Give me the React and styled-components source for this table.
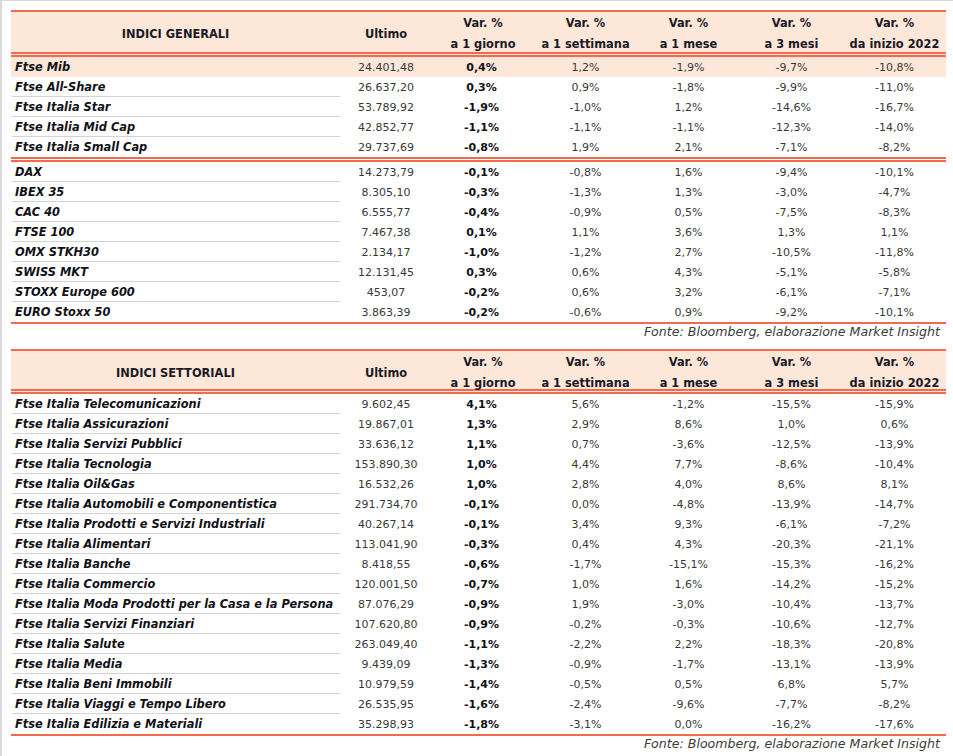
import React from "react";
import styled, { createGlobalStyle } from "styled-components";

const ORANGE = "#f26a50";
const PEACH = "#fde7d9";
const COLS = "329px 92px 102px 103px 103px 103px 103px";

const GlobalStyle = createGlobalStyle`
  html, body {
    margin: 0;
    padding: 0;
    background: #ffffff;
  }
  body {
    font-family: "DejaVu Sans", "Liberation Sans", sans-serif;
    color: #141420;
  }
`;

const generali = [
  [
    ["Ftse Mib", "24.401,48", "0,4%", "1,2%", "-1,9%", "-9,7%", "-10,8%", true],
    ["Ftse All-Share", "26.637,20", "0,3%", "0,9%", "-1,8%", "-9,9%", "-11,0%"],
    ["Ftse Italia Star", "53.789,92", "-1,9%", "-1,0%", "1,2%", "-14,6%", "-16,7%"],
    ["Ftse Italia Mid Cap", "42.852,77", "-1,1%", "-1,1%", "-1,1%", "-12,3%", "-14,0%"],
    ["Ftse Italia Small Cap", "29.737,69", "-0,8%", "1,9%", "2,1%", "-7,1%", "-8,2%"],
  ],
  [
    ["DAX", "14.273,79", "-0,1%", "-0,8%", "1,6%", "-9,4%", "-10,1%"],
    ["IBEX 35", "8.305,10", "-0,3%", "-1,3%", "1,3%", "-3,0%", "-4,7%"],
    ["CAC 40", "6.555,77", "-0,4%", "-0,9%", "0,5%", "-7,5%", "-8,3%"],
    ["FTSE 100", "7.467,38", "0,1%", "1,1%", "3,6%", "1,3%", "1,1%"],
    ["OMX STKH30", "2.134,17", "-1,0%", "-1,2%", "2,7%", "-10,5%", "-11,8%"],
    ["SWISS MKT", "12.131,45", "0,3%", "0,6%", "4,3%", "-5,1%", "-5,8%"],
    ["STOXX Europe 600", "453,07", "-0,2%", "0,6%", "3,2%", "-6,1%", "-7,1%"],
    ["EURO Stoxx 50", "3.863,39", "-0,2%", "-0,6%", "0,9%", "-9,2%", "-10,1%"],
  ],
];

const settoriali = [
  [
    ["Ftse Italia Telecomunicazioni", "9.602,45", "4,1%", "5,6%", "-1,2%", "-15,5%", "-15,9%"],
    ["Ftse Italia Assicurazioni", "19.867,01", "1,3%", "2,9%", "8,6%", "1,0%", "0,6%"],
    ["Ftse Italia Servizi Pubblici", "33.636,12", "1,1%", "0,7%", "-3,6%", "-12,5%", "-13,9%"],
    ["Ftse Italia Tecnologia", "153.890,30", "1,0%", "4,4%", "7,7%", "-8,6%", "-10,4%"],
    ["Ftse Italia Oil&Gas", "16.532,26", "1,0%", "2,8%", "4,0%", "8,6%", "8,1%"],
    ["Ftse Italia Automobili e Componentistica", "291.734,70", "-0,1%", "0,0%", "-4,8%", "-13,9%", "-14,7%"],
    ["Ftse Italia Prodotti e Servizi Industriali", "40.267,14", "-0,1%", "3,4%", "9,3%", "-6,1%", "-7,2%"],
    ["Ftse Italia Alimentari", "113.041,90", "-0,3%", "0,4%", "4,3%", "-20,3%", "-21,1%"],
    ["Ftse Italia Banche", "8.418,55", "-0,6%", "-1,7%", "-15,1%", "-15,3%", "-16,2%"],
    ["Ftse Italia Commercio", "120.001,50", "-0,7%", "1,0%", "1,6%", "-14,2%", "-15,2%"],
    ["Ftse Italia Moda Prodotti per la Casa e la Persona", "87.076,29", "-0,9%", "1,9%", "-3,0%", "-10,4%", "-13,7%"],
    ["Ftse Italia Servizi Finanziari", "107.620,80", "-0,9%", "-0,2%", "-0,3%", "-10,6%", "-12,7%"],
    ["Ftse Italia Salute", "263.049,40", "-1,1%", "-2,2%", "2,2%", "-18,3%", "-20,8%"],
    ["Ftse Italia Media", "9.439,09", "-1,3%", "-0,9%", "-1,7%", "-13,1%", "-13,9%"],
    ["Ftse Italia Beni Immobili", "10.979,59", "-1,4%", "-0,5%", "0,5%", "6,8%", "5,7%"],
    ["Ftse Italia Viaggi e Tempo Libero", "26.535,95", "-1,6%", "-2,4%", "-9,6%", "-7,7%", "-8,2%"],
    ["Ftse Italia Edilizia e Materiali", "35.298,93", "-1,8%", "-3,1%", "0,0%", "-16,2%", "-17,6%"],
  ],
];

const periods = ["a 1 giorno", "a 1 settimana", "a 1 mese", "a 3 mesi", "da inizio 2022"];

const Page = styled.div`
  min-height: 755px;
  box-sizing: border-box;
  border-top: 1px solid #d9d9d9;
  border-left: 2px solid #dadada;
  padding: 9px 0 0 9px;
`;

const Table = styled.section`
  width: 935px;
  border-top: 2px solid ${ORANGE};
  border-bottom: 2px solid ${ORANGE};
`;

const HeadRow = styled.div`
  display: grid;
  grid-template-columns: ${COLS};
  height: ${(p) => p.$height - 1}px;
  padding-top: 1px;
  background: ${PEACH};
  border-bottom: 5px double ${ORANGE};
  font-size: 11.4px;
  font-weight: bold;
  color: #1a1a26;
`;

const HeadCell = styled.div`
  display: flex;
  flex-direction: column;
  align-items: center;
  justify-content: center;
  line-height: 21px;
  white-space: nowrap;
`;

const Group = styled.div`
  & + & {
    border-top: 5px double ${ORANGE};
  }
`;

const Row = styled.div`
  display: grid;
  grid-template-columns: ${COLS};
  height: 20px;
  background: ${(p) => (p.$highlight ? PEACH : "transparent")};
`;

const Label = styled.div`
  display: flex;
  align-items: center;
  box-sizing: border-box;
  padding-left: 3px;
  margin-left: 1px;
  font-size: 11.4px;
  font-weight: bold;
  font-style: italic;
  color: #111118;
  white-space: nowrap;
  border-bottom: 1px solid ${(p) => (p.$line ? "#d4d4d4" : "transparent")};
`;

const Value = styled.div`
  display: flex;
  align-items: center;
  justify-content: center;
  padding-right: ${(p) => (p.$bold ? 3 : 0)}px;
  font-size: 11px;
  font-weight: ${(p) => (p.$bold ? "bold" : "normal")};
  color: ${(p) => (p.$bold ? "#111118" : "#383838")};
  white-space: nowrap;
`;

const Source = styled.div`
  width: 929px;
  height: 25px;
  text-align: right;
  font-size: 12.6px;
  font-style: italic;
  line-height: 16px;
  color: #3c3c3c;
`;

const DataTable = ({ title, groups, headHeight }) => (
  <Table>
    <HeadRow $height={headHeight}>
      <HeadCell>{title}</HeadCell>
      <HeadCell>Ultimo</HeadCell>
      {periods.map((p) => (
        <HeadCell key={p}>
          <span>Var. %</span>
          <span>{p}</span>
        </HeadCell>
      ))}
    </HeadRow>
    {groups.map((rows, gi) => (
      <Group key={gi}>
        {rows.map((r, i) => (
          <Row key={r[0]} $highlight={r[7]}>
            <Label $line={i < rows.length - 1 && !r[7]}>{r[0]}</Label>
            <Value>{r[1]}</Value>
            <Value $bold>{r[2]}</Value>
            {r.slice(3, 7).map((v, k) => (
              <Value key={k}>{v}</Value>
            ))}
          </Row>
        ))}
      </Group>
    ))}
  </Table>
);

export default function App() {
  return (
    <Page>
      <GlobalStyle />
      <DataTable title="INDICI GENERALI" groups={generali} headHeight={40} />
      <Source>Fonte: Bloomberg, elaborazione Market Insight</Source>
      <DataTable title="INDICI SETTORIALI" groups={settoriali} headHeight={38} />
      <Source>Fonte: Bloomberg, elaborazione Market Insight</Source>
    </Page>
  );
}
